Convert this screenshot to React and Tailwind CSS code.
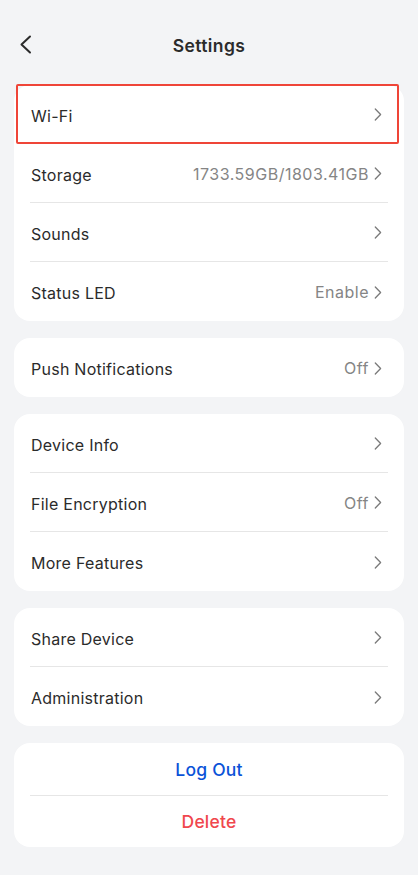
import React from "react";

const Chevron = () => (
  <svg width="8" height="13" viewBox="0 0 8 13" fill="none" className="ml-[5px] shrink-0">
    <path d="M1.3 1 L6.6 6.5 L1.3 12" stroke="#7a7a7a" strokeWidth="1.3" strokeLinecap="round" strokeLinejoin="round" />
  </svg>
);

const Row = ({ label, value, last }) => (
  <div className="px-4">
    <div className={`flex items-center h-[59px] pt-[3px] ${last ? "" : "border-b border-[#e6e6e6]"}`}>
      <span className="text-[16px] tracking-[0.25px] text-[#2b2b2b] pl-px">{label}</span>
      <div className="ml-auto flex items-center pr-[6px] -mt-[2px]">
        {value && <span className="text-[16px] tracking-[0.5px] text-[#858585]">{value}</span>}
        <Chevron />
      </div>
    </div>
  </div>
);

const Card = ({ children }) => <div className="bg-white rounded-2xl relative">{children}</div>;

export default function App() {
  return (
    <div className="min-h-[875px] bg-[#f3f4f6] px-[14px] pb-6" style={{ fontFamily: "Inter, 'Noto Sans', sans-serif" }}>
      <div className="relative h-[85px] flex items-start justify-center">
        <svg width="13" height="19" viewBox="0 0 13 19" fill="none" className="absolute left-[5px] top-[35px]">
          <path d="M11 1.5 L2.5 9.5 L11 17.5" stroke="#2b2b2b" strokeWidth="2" strokeLinecap="round" strokeLinejoin="round" />
        </svg>
        <span className="mt-[33px] text-[17.5px] tracking-[0.4px] font-semibold text-[#2b2b2b]">Settings</span>
      </div>
      <div className="flex flex-col gap-[17px]">
        <Card>
          <div className="absolute left-[2px] right-[5px] -top-px h-[60px] border-2 border-[#ef4538] rounded-[2px] pointer-events-none" />
          <Row label="Wi-Fi" />
          <Row label="Storage" value="1733.59GB/1803.41GB" />
          <Row label="Sounds" />
          <Row label="Status LED" value="Enable" last />
        </Card>
        <Card>
          <Row label="Push Notifications" value="Off" last />
        </Card>
        <Card>
          <Row label="Device Info" />
          <Row label="File Encryption" value="Off" />
          <Row label="More Features" last />
        </Card>
        <Card>
          <Row label="Share Device" />
          <Row label="Administration" last />
        </Card>
        <Card>
          <div className="px-4">
            <div className="h-[53px] pt-[3px] flex items-center justify-center border-b border-[#e6e6e6] text-[17.5px] tracking-[0.2px] text-[#0a52d8] font-medium">Log Out</div>
            <div className="h-[51px] pt-[1px] flex items-center justify-center text-[17.5px] tracking-[0.2px] text-[#f0474d] font-medium">Delete</div>
          </div>
        </Card>
      </div>
    </div>
  );
}
